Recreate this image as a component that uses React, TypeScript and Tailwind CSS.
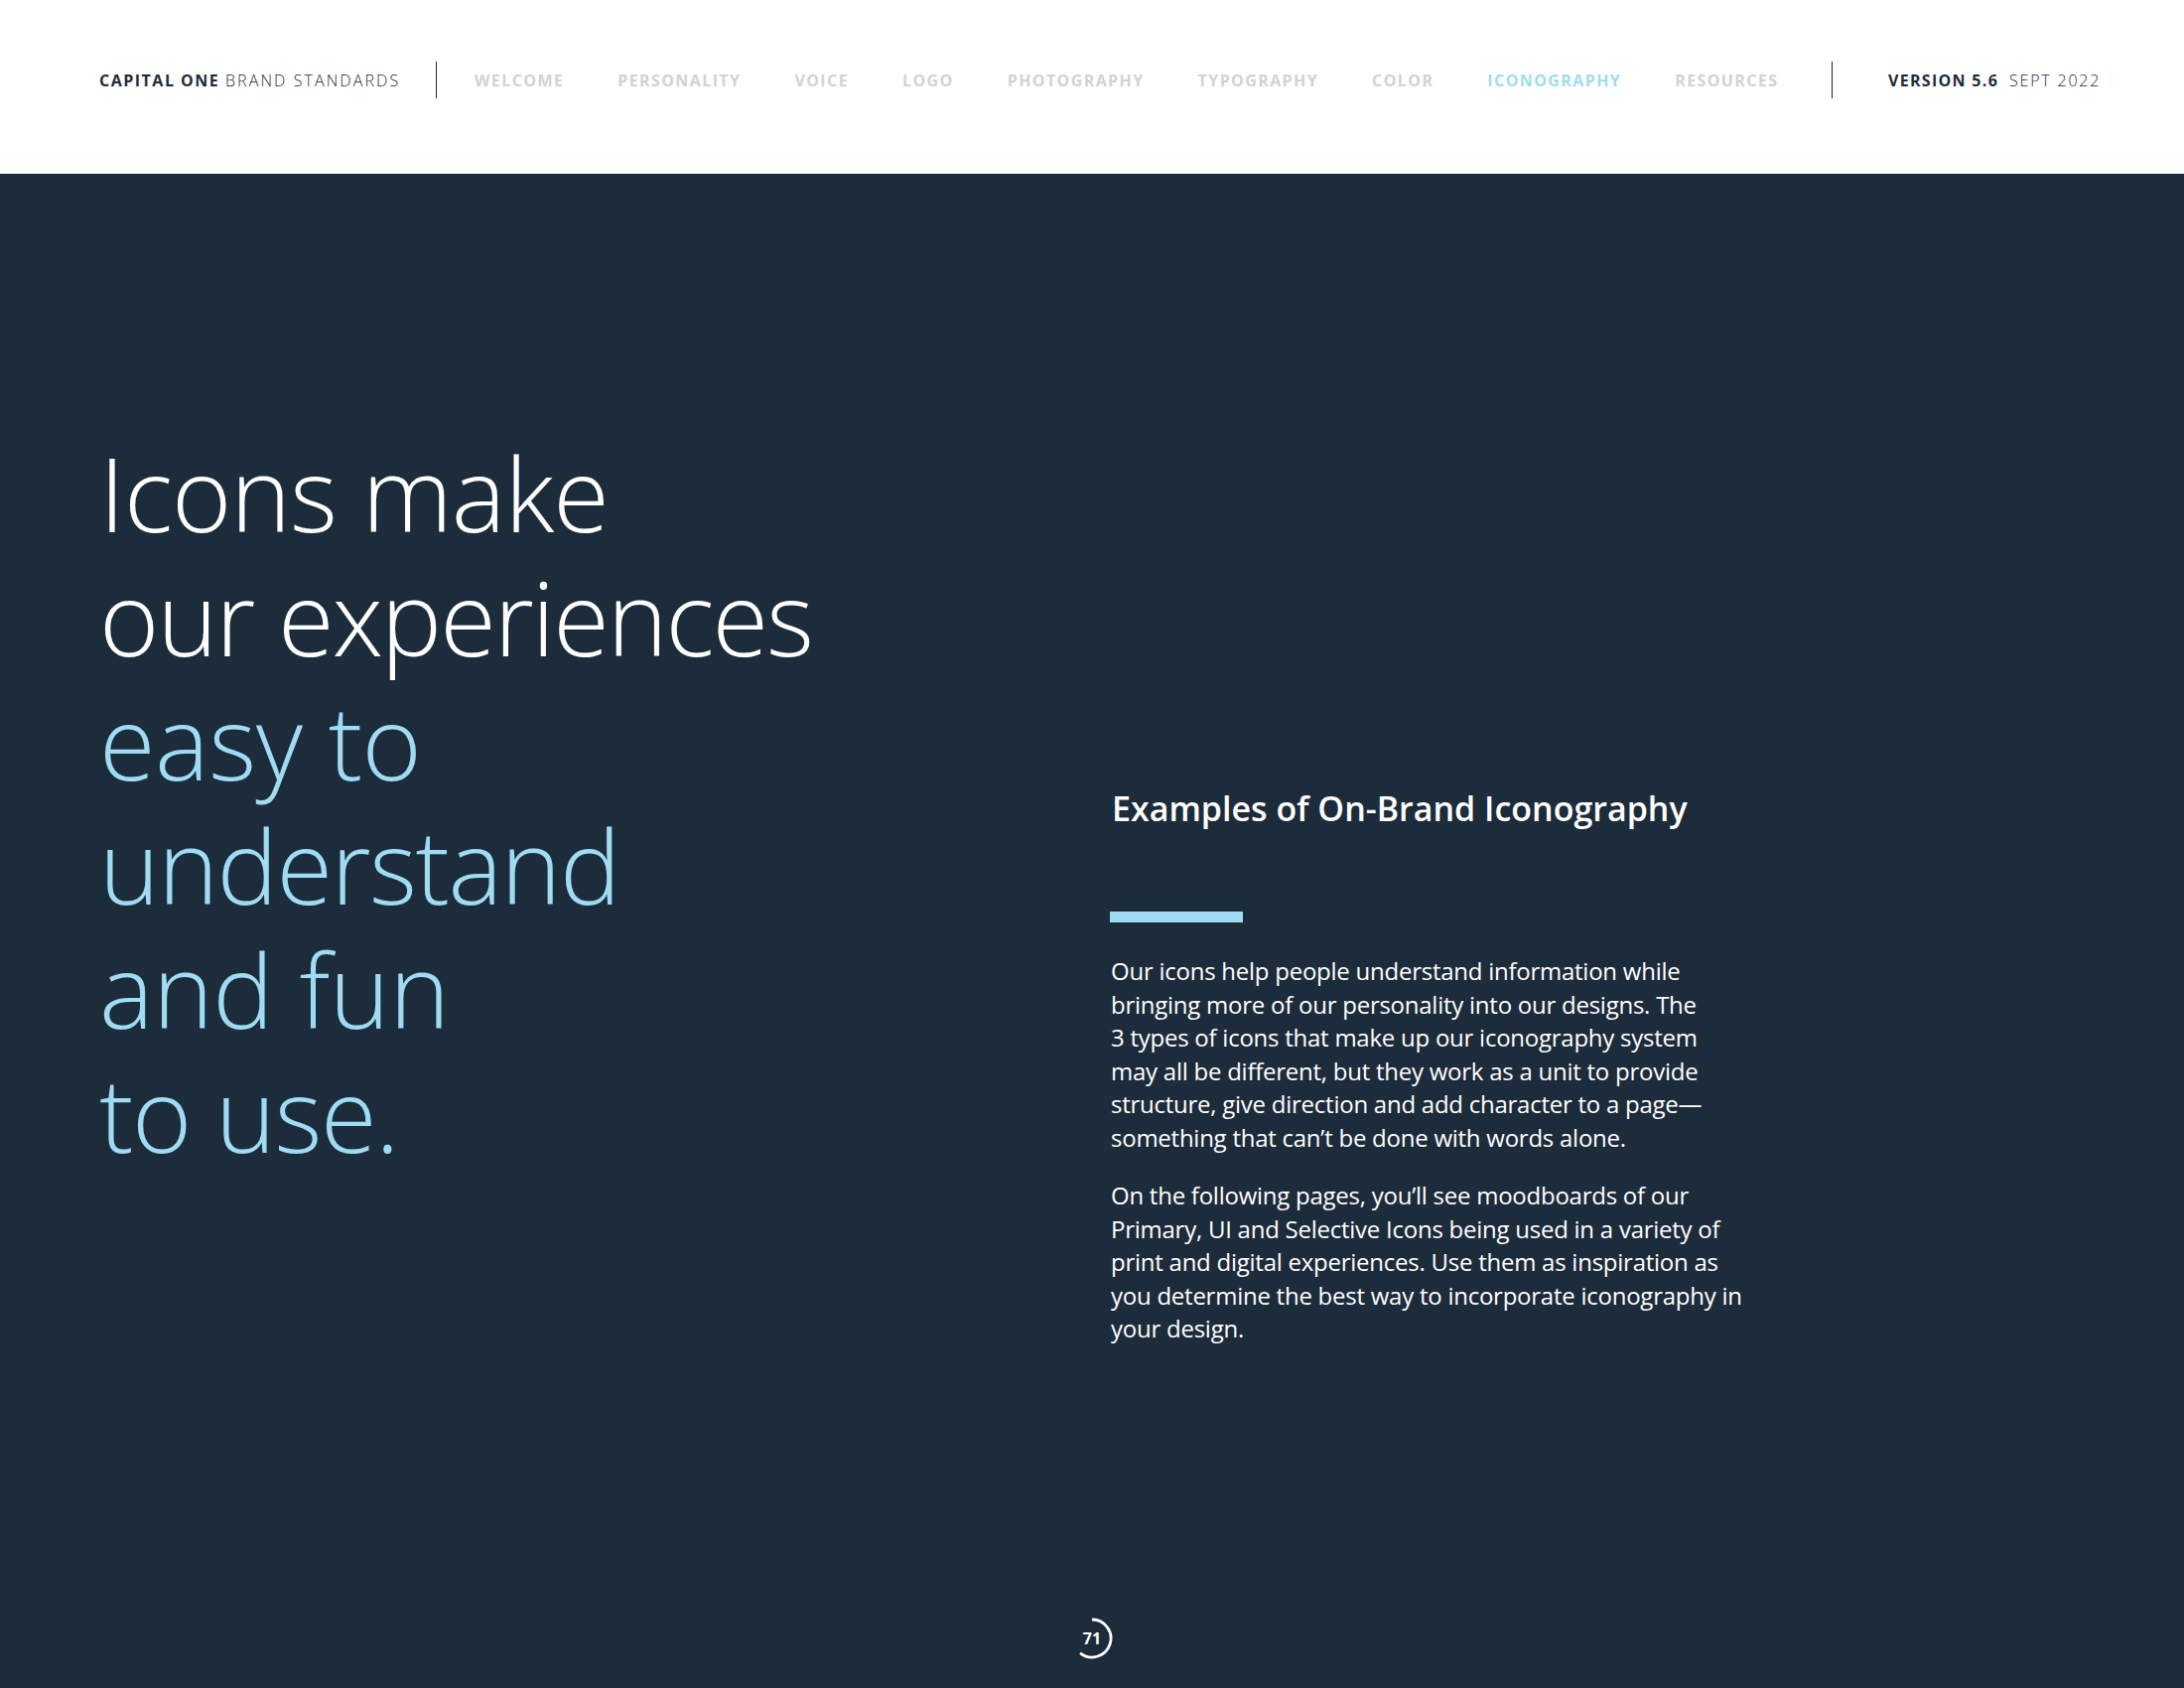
const navLinks = ["WELCOME", "PERSONALITY", "VOICE", "LOGO", "PHOTOGRAPHY", "TYPOGRAPHY", "COLOR", "ICONOGRAPHY", "RESOURCES"];

const PageMark = () => (
  <div className="relative w-[42px] h-[42px] flex items-center justify-center">
    <svg viewBox="0 0 42 42" className="absolute inset-0 w-[42px] h-[42px]" fill="none">
      <path d="M21 2A19 19 0 1 1 9.1 35.8" stroke="#ffffff" strokeWidth="2.8" />
    </svg>
    <span className="text-[16px] font-bold text-white">71</span>
  </div>
);

export default function App() {
  return (
    <div className="w-[2200px] h-[1700px] flex flex-col bg-[#1d2c3b] font-['Open_Sans','Noto_Sans',sans-serif]">
      <header className="h-[175px] bg-white flex items-center pl-[100px] pb-[14px] text-[16px] tracking-[1.3px] text-[#1d2c3b]">
        <div className="w-[339px] shrink-0 flex whitespace-pre">
          <span className="font-bold tracking-[1.5px]">CAPITAL ONE </span>
          <span className="font-light tracking-[2.1px]">BRAND STANDARDS</span>
        </div>
        <div className="w-px h-[37px] shrink-0 bg-[#1d2c3b]" />
        <nav className="w-[1405px] shrink-0 pl-[38px] flex gap-[54px] font-bold tracking-[1.4px] text-[#d2d2d2]">
          {navLinks.map((l) => (
            <span key={l} className={l === "ICONOGRAPHY" ? "text-[#9fdcf3]" : ""}>{l}</span>
          ))}
        </nav>
        <div className="w-[57px] h-[37px] shrink-0 border-l border-[#1d2c3b]" />
        <div className="flex whitespace-pre">
          <span className="font-bold">VERSION 5.6  </span>
          <span className="font-light tracking-[1.8px]">SEPT 2022</span>
        </div>
      </header>

      <main className="flex-1 flex flex-col">
        <div className="flex-1 flex pl-[100px]">
          <h1 className="w-[1018px] pt-[259px] text-[103px] leading-[125px] tracking-[-1.5px] font-light text-white">
            <span className="block tracking-[-1px]">Icons make</span>
            <span className="block tracking-[-2px]">our experiences</span>
            <span className="block tracking-[-0.5px] text-[#9fdcf3]">easy to</span>
            <span className="block text-[#9fdcf3]">understand</span>
            <span className="block tracking-[-0.5px] text-[#9fdcf3]">and fun</span>
            <span className="block text-[#9fdcf3]">to use.</span>
          </h1>
          <section className="pt-[616px] text-white">
            <h2 className="pl-[2px] text-[34px] leading-[46px] font-semibold">Examples of On-Brand Iconography</h2>
            <div className="mt-[81px] w-[134px] h-[11px] bg-[#9fdcf3]" />
            <p className="mt-[32px] pl-px text-[24px] leading-[33.5px] tracking-[-0.25px]">
              Our icons help people understand information while<br />
              bringing more of our personality into our designs. The<br />
              3 types of icons that make up our iconography system<br />
              may all be different, but they work as a unit to provide<br />
              structure, give direction and add character to a page—<br />
              something that can’t be done with words alone.
            </p>
            <p className="mt-[25px] pl-px text-[24px] leading-[33.5px] tracking-[-0.25px]">
              On the following pages, you’ll see moodboards of our<br />
              Primary, UI and Selective Icons being used in a variety of<br />
              print and digital experiences. Use them as inspiration as<br />
              you determine the best way to incorporate iconography in<br />
              your design.
            </p>
          </section>
        </div>
        <footer className="h-[72px] pt-px flex justify-center">
          <PageMark />
        </footer>
      </main>
    </div>
  );
}
